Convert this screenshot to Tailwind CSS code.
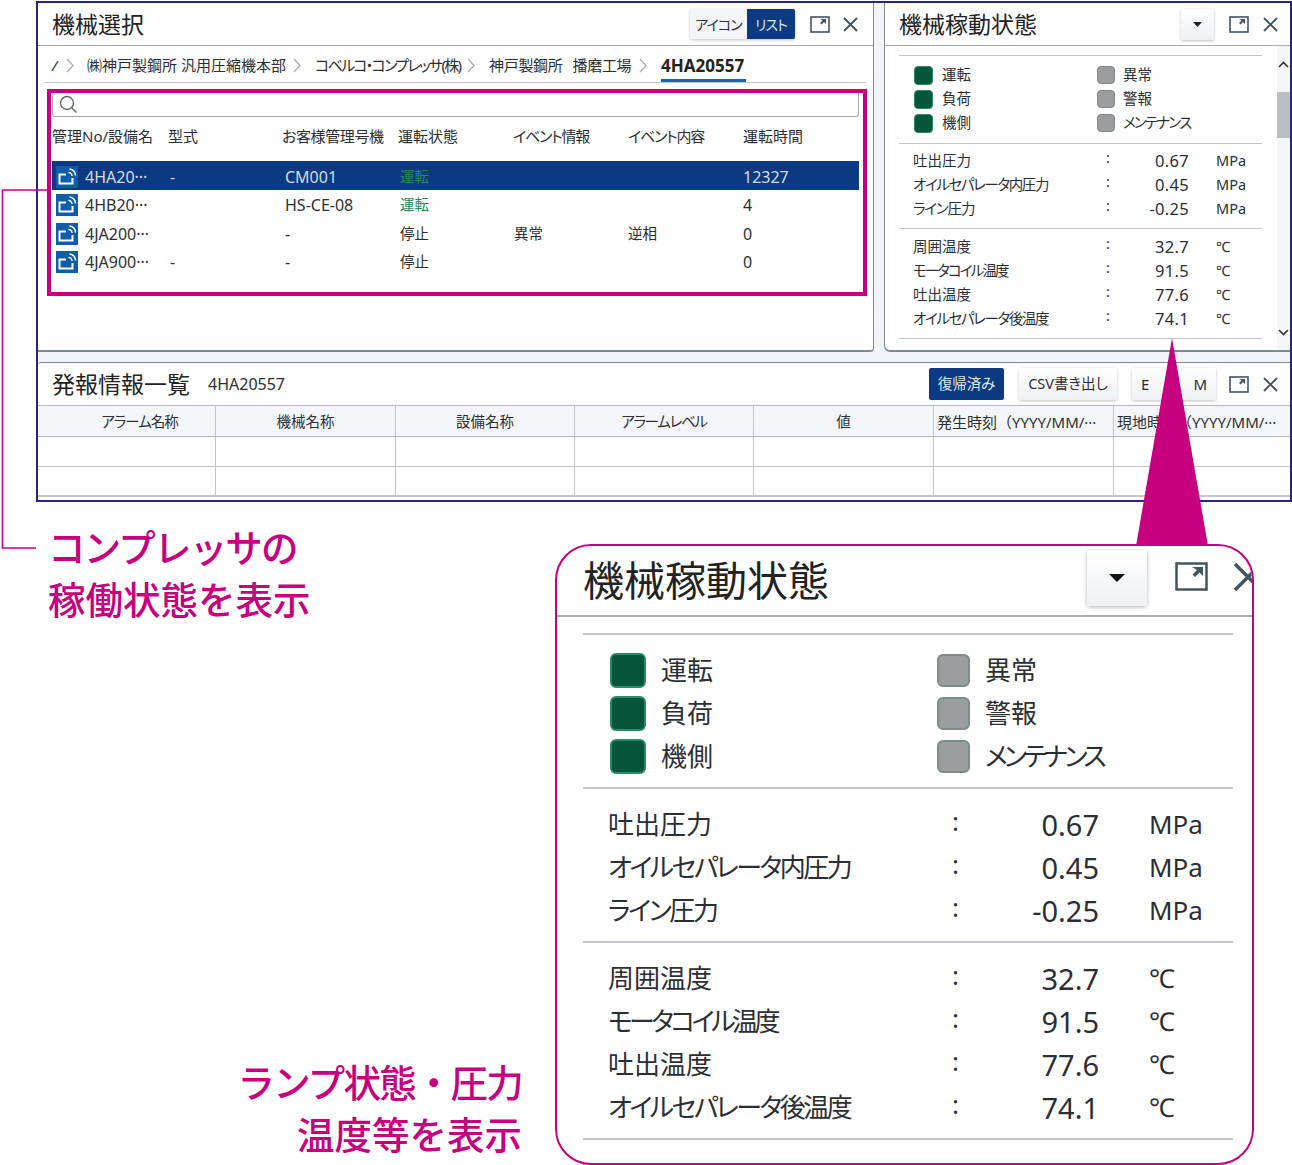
<!DOCTYPE html>
<html lang="ja">
<head>
<meta charset="UTF-8">
<title>機械稼動状態</title>
<script src="https://cdn.jsdelivr.net/npm/@tailwindcss/browser@4"></script>
</head>
<body class="bg-white">
<div class="relative w-[1292px] h-[1165px] overflow-hidden bg-white text-[#2b2f33] [font-family:'Noto_Sans','Noto_Sans_CJK_JP',sans-serif] [font-feature-settings:'palt']">

  <!-- screen capture -->
  <div class="ml-[36px] mt-[1px] w-[1256px] h-[501px] border-2 border-[#2a2380] bg-[#f3f4f9] flex flex-col">
    <div class="flex h-[349px] gap-[10px]">

      <!-- 機械選択 -->
      <section class="w-[836px] bg-white border-r border-b-2 border-[#7d8b90] rounded-br-[4px] flex flex-col">
        <div class="h-[43px] shrink-0 flex items-center border-b border-[#a9aeb3] pl-[14px]">
          <h2 class="text-[23px] text-[#222] font-normal">機械選択</h2>
          <div class="ml-auto flex h-[30px] w-[105px] text-[14px] tracking-[-1px] shadow-[0_1px_3px_rgba(0,0,0,0.25)] rounded-[2px]">
            <span class="w-[57px] flex items-center justify-center bg-[#f4f5f7]">アイコン</span>
            <span class="w-[48px] flex items-center justify-center bg-[#0b3a82] text-[#dfe6f0] rounded-r-[2px]">リスト</span>
          </div>
          <svg class="ml-[15px] w-[20px] h-[17px]" viewBox="0 0 20 17"><rect x="1" y="1" width="18" height="15" fill="none" stroke="#40565e" stroke-width="1.6"/><path d="M10 3h6v5l-2-2-2.500 2.500-1.500-1.500 2.500-2.500z" fill="#40565e"/></svg>
          <svg class="ml-[12px] mr-[14px] w-[17px] h-[17px]" viewBox="0 0 17 17"><path d="M2 2l13 13M15 2L2 15" stroke="#40565e" stroke-width="1.900" fill="none"/></svg>
        </div>

        <div class="mx-[7px] h-[37px] shrink-0 flex items-center border-b border-[#c3c6ca] text-[15px] pl-[7px] pt-[3px]">
          <span class="w-[14px] italic">/</span>
          <svg class="w-[8px] h-[15px] mr-[13px]" viewBox="0 0 8 15"><path d="M1 1l6 6.500-6 6.500" fill="none" stroke="#a8adb2" stroke-width="1.300"/></svg>
          <span class="w-[199px] whitespace-nowrap">㈱神戸製鋼所 汎用圧縮機本部</span>
          <svg class="ml-[7px] w-[8px] h-[15px] mr-[14px]" viewBox="0 0 8 15"><path d="M1 1l6 6.500-6 6.500" fill="none" stroke="#a8adb2" stroke-width="1.300"/></svg>
          <span class="w-[145px] whitespace-nowrap tracking-[-1.700px]">コベルコ・コンプレッサ(株)</span>
          <svg class="ml-[7px] w-[8px] h-[15px] mr-[14px]" viewBox="0 0 8 15"><path d="M1 1l6 6.500-6 6.500" fill="none" stroke="#a8adb2" stroke-width="1.300"/></svg>
          <span class="w-[143px] whitespace-nowrap flex gap-[10px] tracking-[-0.300px]"><span>神戸製鋼所</span><span>播磨工場</span></span>
          <svg class="ml-[7px] w-[8px] h-[15px] mr-[14px]" viewBox="0 0 8 15"><path d="M1 1l6 6.500-6 6.500" fill="none" stroke="#a8adb2" stroke-width="1.300"/></svg>
          <span class="relative h-full flex items-center font-bold text-[17px] text-[#222] w-[85px] whitespace-nowrap">4HA20557<span class="absolute left-0 right-0 bottom-0 h-[3px] bg-[#1565b0]"></span></span>
        </div>

        <!-- table, framed in the pink box -->
        <div class="ml-[9px] mt-[6px] w-[820px] h-[207px] border-[4px] border-[#c6007e] pl-[1px] pr-[4px] pt-0">
          <div class="h-[24px] border border-t-0 border-[#a5aaae] rounded-b-[3px] flex items-center pl-[6px]">
            <svg class="w-[19px] h-[19px]" viewBox="0 0 19 19"><circle cx="8" cy="8" r="6.500" fill="none" stroke="#5c6a70" stroke-width="1.400"/><path d="M12.500 12.500l5 5" stroke="#5c6a70" stroke-width="1.400"/></svg>
          </div>
          <div class="grid grid-cols-[116px_114px_116px_115px_115px_115px_1fr] text-[15px] whitespace-nowrap h-[44px] pt-[8px]">
            <span>管理No/設備名</span><span>型式</span><span class="tracking-[-0.400px]">お客様管理号機</span><span>運転状態</span><span class="tracking-[-1.200px]">イベント情報</span><span class="tracking-[-1.200px]">イベント内容</span><span>運転時間</span>
          </div>

          <div class="grid grid-cols-[116px_115px_115px_114px_114px_115px_1fr] h-[29px] items-center text-[16px] pt-[2px] bg-[#0b3a82] text-[#d5dde9]">
            <span class="flex items-center pl-[4px] gap-[7px]">
              <svg class="w-[22px] h-[22px] shrink-0" viewBox="0 0 22 22"><rect width="22" height="22" fill="#0f5cab"/><path d="M10 8.500H3.500V17.500H16.500V12" fill="none" stroke="#fff" stroke-width="2"/><path d="M12.500 6.500a3.500 3.500 0 0 1 3.500 3.500M13.500 3a6.500 6.500 0 0 1 6 6.500" fill="none" stroke="#fff" stroke-width="1.500"/></svg>4HA20···</span>
            <span class="pl-[2px]">-</span><span class="pl-[2px]">CM001</span><span class="pl-[2px] text-[14.500px] text-[#1f8a5a]">運転</span><span></span><span></span><span class="pl-[2px]">12327</span>
          </div>
          <div class="grid grid-cols-[116px_115px_115px_114px_114px_115px_1fr] h-[28.500px] items-center text-[16px] pt-[1px]">
            <span class="flex items-center pl-[4px] gap-[7px]">
              <svg class="w-[22px] h-[22px] shrink-0" viewBox="0 0 22 22"><rect width="22" height="22" fill="#0f5cab"/><path d="M10 8.500H3.500V17.500H16.500V12" fill="none" stroke="#fff" stroke-width="2"/><path d="M12.500 6.500a3.500 3.500 0 0 1 3.500 3.500M13.500 3a6.500 6.500 0 0 1 6 6.500" fill="none" stroke="#fff" stroke-width="1.500"/></svg>4HB20···</span>
            <span></span><span class="pl-[2px]">HS-CE-08</span><span class="pl-[2px] text-[14.500px] text-[#1f8a5a]">運転</span><span></span><span></span><span class="pl-[2px]">4</span>
          </div>
          <div class="grid grid-cols-[116px_115px_115px_114px_114px_115px_1fr] h-[28.500px] items-center text-[16px] pt-[2px]">
            <span class="flex items-center pl-[4px] gap-[7px]">
              <svg class="w-[22px] h-[22px] shrink-0" viewBox="0 0 22 22"><rect width="22" height="22" fill="#0f5cab"/><path d="M10 8.500H3.500V17.500H16.500V12" fill="none" stroke="#fff" stroke-width="2"/><path d="M12.500 6.500a3.500 3.500 0 0 1 3.500 3.500M13.500 3a6.500 6.500 0 0 1 6 6.500" fill="none" stroke="#fff" stroke-width="1.500"/></svg>4JA200···</span>
            <span></span><span class="pl-[2px]">-</span><span class="pl-[2px] text-[14.500px]">停止</span><span class="pl-[2px] text-[14.500px]">異常</span><span class="pl-[2px] text-[14.500px]">逆相</span><span class="pl-[2px]">0</span>
          </div>
          <div class="grid grid-cols-[116px_115px_115px_114px_114px_115px_1fr] h-[28.500px] items-center text-[16px] pt-[1px]">
            <span class="flex items-center pl-[4px] gap-[7px]">
              <svg class="w-[22px] h-[22px] shrink-0" viewBox="0 0 22 22"><rect width="22" height="22" fill="#0f5cab"/><path d="M10 8.500H3.500V17.500H16.500V12" fill="none" stroke="#fff" stroke-width="2"/><path d="M12.500 6.500a3.500 3.500 0 0 1 3.500 3.500M13.500 3a6.500 6.500 0 0 1 6 6.500" fill="none" stroke="#fff" stroke-width="1.500"/></svg>4JA900···</span>
            <span class="pl-[2px]">-</span><span class="pl-[2px]">-</span><span class="pl-[2px] text-[14.500px]">停止</span><span></span><span></span><span class="pl-[2px]">0</span>
          </div>
        </div>
      </section>

      <!-- 機械稼動状態 -->
      <section class="flex-1 bg-white border-l border-b-2 border-[#7d8b90] rounded-bl-[6px] flex flex-col">
        <div class="h-[43px] shrink-0 flex items-center border-b border-[#a9aeb3] pl-[14px]">
          <h2 class="text-[23px] text-[#222] font-normal">機械稼動状態</h2>
          <span class="ml-auto w-[33px] h-[31px] flex items-center justify-center bg-gradient-to-b from-white to-[#eef0f3] shadow-[0_1px_3px_rgba(0,0,0,0.25)] rounded-[2px]">
            <svg class="w-[9px] h-[5px]" viewBox="0 0 9 5"><path d="M0 0h9L4.500 5z" fill="#222"/></svg>
          </span>
          <svg class="ml-[15px] w-[20px] h-[17px]" viewBox="0 0 20 17"><rect x="1" y="1" width="18" height="15" fill="none" stroke="#40565e" stroke-width="1.600"/><path d="M10 3h6v5l-2-2-2.500 2.500-1.500-1.500 2.500-2.500z" fill="#40565e"/></svg>
          <svg class="ml-[13px] mr-[11px] w-[17px] h-[17px]" viewBox="0 0 17 17"><path d="M2 2l13 13M15 2L2 15" stroke="#40565e" stroke-width="1.900" fill="none"/></svg>
        </div>
        <div class="flex flex-1 min-h-0">
          <div class="w-[363px] ml-[14px] mt-[9px] text-[14.500px] whitespace-nowrap">
            <div class="border-t border-[#c3c6ca] h-[88px] pt-[7px] pl-[15px] grid grid-cols-[183px_1fr] auto-rows-[24px] items-center">
              <span class="flex items-center gap-[9px]"><i class="w-[19px] h-[19px] rounded-[4px] bg-[#04553a] border border-[#2b8a6a]"></i>運転</span>
              <span class="flex items-center gap-[8px]"><i class="w-[18px] h-[18px] rounded-[4px] bg-[#9a9c9d] border border-[#7f8a8a]"></i>異常</span>
              <span class="flex items-center gap-[9px]"><i class="w-[19px] h-[19px] rounded-[4px] bg-[#04553a] border border-[#2b8a6a]"></i>負荷</span>
              <span class="flex items-center gap-[8px]"><i class="w-[18px] h-[18px] rounded-[4px] bg-[#9a9c9d] border border-[#7f8a8a]"></i>警報</span>
              <span class="flex items-center gap-[9px]"><i class="w-[19px] h-[19px] rounded-[4px] bg-[#04553a] border border-[#2b8a6a]"></i>機側</span>
              <span class="flex items-center gap-[8px] tracking-[-1.800px]"><i class="w-[18px] h-[18px] rounded-[4px] bg-[#9a9c9d] border border-[#7f8a8a]"></i>メンテナンス</span>
            </div>
            <div class="border-t border-[#c3c6ca] h-[85px] pt-[5px] pl-[14px] grid grid-cols-[193px_30px_53px_1fr] auto-rows-[24px] items-center">
              <span>吐出圧力</span><span class="-translate-y-[3px]">:</span><span class="text-right text-[16.500px] tracking-[0.300px]">0.67</span><span class="pl-[27px]">MPa</span>
              <span class="tracking-[-1.400px]">オイルセパレータ内圧力</span><span class="-translate-y-[3px]">:</span><span class="text-right text-[16.500px] tracking-[0.300px]">0.45</span><span class="pl-[27px]">MPa</span>
              <span class="tracking-[-1.200px]">ライン圧力</span><span class="-translate-y-[3px]">:</span><span class="text-right text-[16.500px] tracking-[0.300px]">-0.25</span><span class="pl-[27px]">MPa</span>
            </div>
            <div class="border-t border-b border-[#c3c6ca] h-[111px] pt-[6px] pl-[14px] grid grid-cols-[193px_30px_53px_1fr] auto-rows-[24px] items-center">
              <span>周囲温度</span><span class="-translate-y-[3px]">:</span><span class="text-right text-[16.500px] tracking-[0.300px]">32.7</span><span class="pl-[27px]">℃</span>
              <span class="tracking-[-1.900px]">モータコイル温度</span><span class="-translate-y-[3px]">:</span><span class="text-right text-[16.500px] tracking-[0.300px]">91.5</span><span class="pl-[27px]">℃</span>
              <span>吐出温度</span><span class="-translate-y-[3px]">:</span><span class="text-right text-[16.500px] tracking-[0.300px]">77.6</span><span class="pl-[27px]">℃</span>
              <span class="tracking-[-1.400px]">オイルセパレータ後温度</span><span class="-translate-y-[3px]">:</span><span class="text-right text-[16.500px] tracking-[0.300px]">74.1</span><span class="pl-[27px]">℃</span>
            </div>
          </div>
          <!-- scrollbar -->
          <div class="ml-[15px] w-[13px] bg-[#f5f6f8] flex flex-col items-center relative">
            <svg class="mt-[15px] w-[11px] h-[7px]" viewBox="0 0 11 7"><path d="M1 6l4.500-4.500L10 6" fill="none" stroke="#333" stroke-width="1.600"/></svg>
            <span class="mt-[24px] w-full h-[46px] bg-[#b9bec2]"></span>
            <svg class="mt-auto mb-[14px] w-[11px] h-[7px]" viewBox="0 0 11 7"><path d="M1 1l4.500 4.500L10 1" fill="none" stroke="#333" stroke-width="1.600"/></svg>
          </div>
        </div>
      </section>
    </div>

    <!-- 発報情報一覧 -->
    <section class="mt-[10px] flex-1 min-h-0 overflow-hidden bg-white border-t border-[#7d8b90] rounded-tl-[3px] flex flex-col">
      <div class="h-[42px] shrink-0 flex items-center pl-[14px]">
        <h2 class="text-[23px] text-[#222] font-normal">発報情報一覧</h2>
        <span class="ml-[18px] text-[16px]">4HA20557</span>
        <span class="ml-auto w-[75px] h-[32px] flex items-center justify-center bg-[#0b3a82] text-[#dfe6f0] text-[14.500px] rounded-[2px]">復帰済み</span>
        <span class="ml-[15px] w-[98px] h-[32px] flex items-center justify-center bg-gradient-to-b from-white to-[#f0f1f4] text-[14.500px] shadow-[0_1px_3px_rgba(0,0,0,0.25)] rounded-[2px]">CSV書き出し</span>
        <span class="ml-[15px] w-[84px] h-[32px] flex items-center justify-between px-[9px] bg-gradient-to-b from-white to-[#f0f1f4] text-[15px] shadow-[0_1px_3px_rgba(0,0,0,0.25)] rounded-[2px]"><span>E</span><span>M</span></span>
        <svg class="ml-[13px] w-[20px] h-[17px]" viewBox="0 0 20 17"><rect x="1" y="1" width="18" height="15" fill="none" stroke="#40565e" stroke-width="1.600"/><path d="M10 3h6v5l-2-2-2.500 2.500-1.500-1.500 2.500-2.500z" fill="#40565e"/></svg>
        <svg class="ml-[13px] mr-[11px] w-[17px] h-[17px]" viewBox="0 0 17 17"><path d="M2 2l13 13M15 2L2 15" stroke="#40565e" stroke-width="1.900" fill="none"/></svg>
      </div>
      <div class="grid grid-cols-[178px_180px_179px_179px_180px_180px_1fr] h-[32px] shrink-0 items-center text-[14.500px] bg-[#f5f6fa] border-y border-[#b4b9bd]">
        <span class="h-full flex items-center justify-center pt-[2px] pl-[26px] tracking-[-1px] border-r border-[#c3c6ca]">アラーム名称</span>
        <span class="h-full flex items-center justify-center pt-[2px] border-r border-[#c3c6ca]">機械名称</span>
        <span class="h-full flex items-center justify-center pt-[2px] border-r border-[#c3c6ca]">設備名称</span>
        <span class="h-full flex items-center justify-center pt-[2px] tracking-[-1.300px] border-r border-[#c3c6ca]">アラームレベル</span>
        <span class="h-full flex items-center justify-center pt-[2px] border-r border-[#c3c6ca]">値</span>
        <span class="h-full flex items-center pt-[2px] pl-[3px] border-r border-[#c3c6ca] whitespace-nowrap overflow-hidden text-[15px] [font-feature-settings:normal]">発生時刻（YYYY/MM/···</span>
        <span class="h-full flex items-center pt-[2px] pl-[3px] whitespace-nowrap overflow-hidden text-[15px] [font-feature-settings:normal]">現地時刻（YYYY/MM/···</span>
      </div>
      <div class="grid grid-cols-[178px_180px_179px_179px_180px_180px_1fr] h-[30px] shrink-0 border-b border-[#c3c6ca]">
        <span class="border-r border-[#c3c6ca]"></span><span class="border-r border-[#c3c6ca]"></span><span class="border-r border-[#c3c6ca]"></span><span class="border-r border-[#c3c6ca]"></span><span class="border-r border-[#c3c6ca]"></span><span class="border-r border-[#c3c6ca]"></span><span></span>
      </div>
      <div class="grid grid-cols-[178px_180px_179px_179px_180px_180px_1fr] h-[30px] shrink-0 border-b-2 border-[#c3c6ca]">
        <span class="border-r border-[#c3c6ca]"></span><span class="border-r border-[#c3c6ca]"></span><span class="border-r border-[#c3c6ca]"></span><span class="border-r border-[#c3c6ca]"></span><span class="border-r border-[#c3c6ca]"></span><span class="border-r border-[#c3c6ca]"></span><span></span>
      </div>
    </section>
  </div>

  <!-- connector from the table to the note -->
  <svg class="absolute left-0 top-0 w-[60px] h-[560px]" viewBox="0 0 60 560"><path d="M47 190H2.500V548H36" fill="none" stroke="#c6007e" stroke-width="1.600"/></svg>
  <p class="absolute left-[48px] top-[522px] text-[37.500px] leading-[52px] font-medium text-[#c6007e] whitespace-nowrap [font-feature-settings:normal]"><span class="tracking-[-1.800px]">コンプレッサの</span><br>稼働状態を表示</p>

  <!-- pointer to the enlarged panel -->
  <svg class="absolute left-[1130px] top-[336px] w-[84px] h-[212px]" viewBox="0 0 84 212"><path d="M42 2L6 210h72z" fill="#c6007e"/></svg>

  <!-- enlarged panel -->
  <section class="absolute left-[555px] top-[544px] w-[699px] h-[621px] border-2 border-[#c6007e] rounded-[36px] bg-white overflow-hidden text-[26px] whitespace-nowrap">
    <div class="relative h-[71px] border-b-2 border-[#a9aeb3]">
      <h2 class="absolute left-[26px] top-[7px] text-[41px] leading-[54px] text-[#222] font-normal">機械稼動状態</h2>
      <span class="absolute left-[530px] top-[4px] w-[60px] h-[56px] flex items-center justify-center bg-gradient-to-b from-white to-[#eef0f3] shadow-[0_1px_4px_rgba(0,0,0,0.3)] rounded-[3px]">
        <svg class="w-[16px] h-[8px]" viewBox="0 0 16 8"><path d="M0 0h16L8 8z" fill="#111"/></svg>
      </span>
      <svg class="absolute left-[618px] top-[16px] w-[33px] h-[29px]" viewBox="0 0 33 29"><rect x="1.500" y="1.500" width="30" height="26" fill="none" stroke="#40565e" stroke-width="2.500"/><path d="M17 5h11v9l-3.500-3.500-4.500 4.500-2.500-2.500 4.500-4.500z" fill="#40565e"/></svg>
      <svg class="absolute left-[676px] top-[16px] w-[30px] h-[30px]" viewBox="0 0 30 30"><path d="M2 2l26 26M28 2L2 28" stroke="#40565e" stroke-width="3.400" fill="none"/></svg>
    </div>
    <div class="ml-[26px] mt-[16px] w-[650px]">
      <div class="border-t-2 border-[#c3c6ca] h-[154px] pt-[14px] pl-[27px] grid grid-cols-[327px_1fr] auto-rows-[43px] items-center">
        <span class="flex items-center gap-[15px]"><i class="w-[36px] h-[35px] rounded-[6px] bg-[#04553a] border-2 border-[#2b8a6a]"></i>運転</span>
        <span class="flex items-center gap-[15px]"><i class="w-[33px] h-[33px] rounded-[6px] bg-[#9a9c9d] border-2 border-[#7f8a8a]"></i>異常</span>
        <span class="flex items-center gap-[15px]"><i class="w-[36px] h-[35px] rounded-[6px] bg-[#04553a] border-2 border-[#2b8a6a]"></i>負荷</span>
        <span class="flex items-center gap-[15px]"><i class="w-[33px] h-[33px] rounded-[6px] bg-[#9a9c9d] border-2 border-[#7f8a8a]"></i>警報</span>
        <span class="flex items-center gap-[15px]"><i class="w-[36px] h-[35px] rounded-[6px] bg-[#04553a] border-2 border-[#2b8a6a]"></i>機側</span>
        <span class="flex items-center gap-[15px] tracking-[-3.700px]"><i class="w-[33px] h-[33px] rounded-[6px] bg-[#9a9c9d] border-2 border-[#7f8a8a]"></i>メンテナンス</span>
      </div>
      <div class="border-t-2 border-[#c3c6ca] h-[154px] pt-[14px] pl-[25px] grid grid-cols-[344px_40px_107px_1fr] auto-rows-[43px] items-center">
        <span>吐出圧力</span><span class="-translate-y-[3px]">:</span><span class="text-right text-[29px]">0.67</span><span class="pl-[50px]">MPa</span>
        <span class="tracking-[-2.500px]">オイルセパレータ内圧力</span><span class="-translate-y-[3px]">:</span><span class="text-right text-[29px]">0.45</span><span class="pl-[50px]">MPa</span>
        <span class="tracking-[-2.400px]">ライン圧力</span><span class="-translate-y-[3px]">:</span><span class="text-right text-[29px]">-0.25</span><span class="pl-[50px]">MPa</span>
      </div>
      <div class="border-t-2 border-b-2 border-[#c3c6ca] h-[199px] pt-[14px] pl-[25px] grid grid-cols-[344px_40px_107px_1fr] auto-rows-[43px] items-center">
        <span>周囲温度</span><span class="-translate-y-[3px]">:</span><span class="text-right text-[29px]">32.7</span><span class="pl-[50px]">℃</span>
        <span class="tracking-[-3.500px]">モータコイル温度</span><span class="-translate-y-[3px]">:</span><span class="text-right text-[29px]">91.5</span><span class="pl-[50px]">℃</span>
        <span>吐出温度</span><span class="-translate-y-[3px]">:</span><span class="text-right text-[29px]">77.6</span><span class="pl-[50px]">℃</span>
        <span class="tracking-[-2.500px]">オイルセパレータ後温度</span><span class="-translate-y-[3px]">:</span><span class="text-right text-[29px]">74.1</span><span class="pl-[50px]">℃</span>
      </div>
    </div>
  </section>

  <p class="absolute right-[770px] top-[1057px] text-right text-[37.500px] leading-[52px] font-medium text-[#c6007e] whitespace-nowrap [font-feature-settings:normal]"><span class="tracking-[-1.800px]">ランプ状態・圧力</span><br>温度等を表示</p>
</div>
</body>
</html>
